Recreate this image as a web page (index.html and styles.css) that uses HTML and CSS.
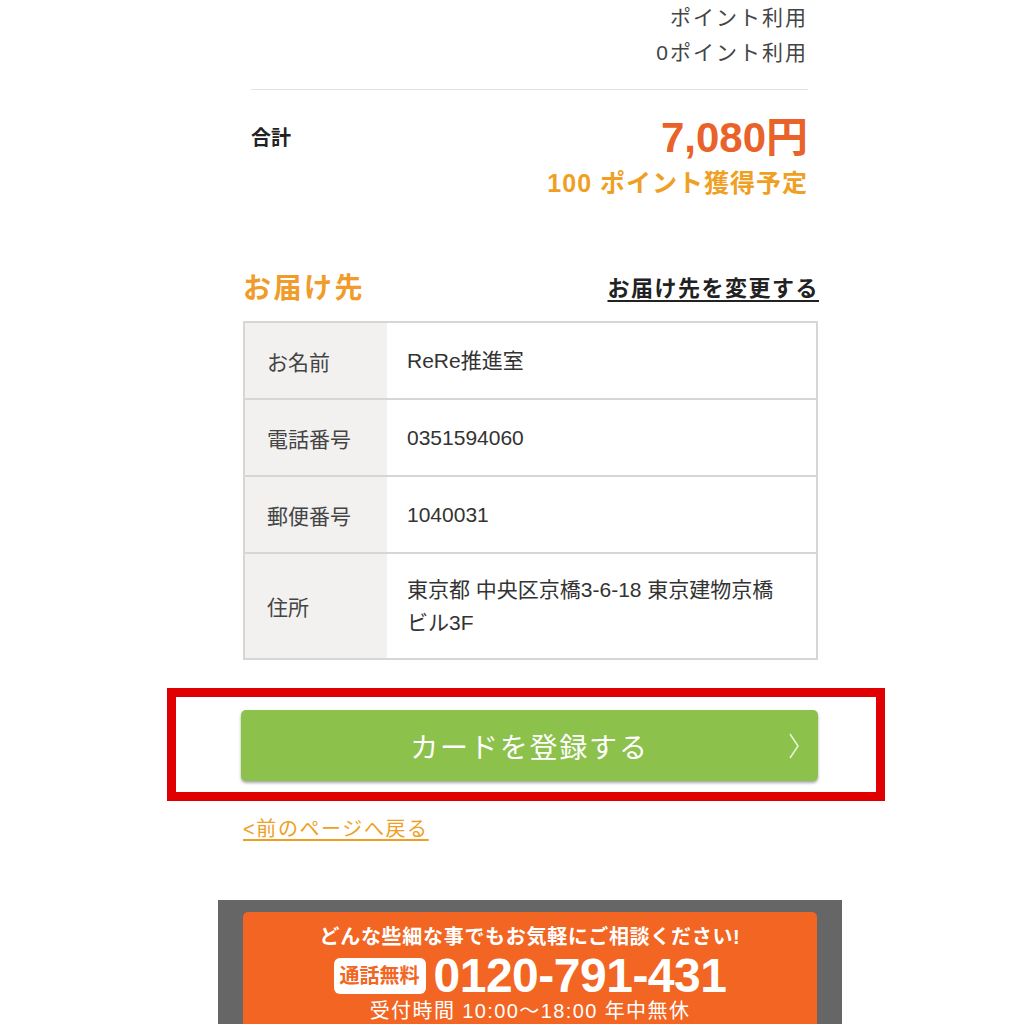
FILE: index.html
```html
<html>
	<head>
		<meta charset="utf-8">
		<link rel="stylesheet" href="styles.css">
	</head>
	<body>
		<div class="page">
			<div class="summary">
				<div class="pointLine">ポイント利用</div>
				<div class="pointLine">0ポイント利用</div>
				<div class="divider"></div>
				<div class="totalRow">
					<div class="totalLabel">合計</div>
					<div class="totalRight">
						<div class="price">7,080円</div>
						<div class="getPoint">100 ポイント獲得予定</div>
					</div>
				</div>
			</div>

			<div class="addrHead">
				<span class="addrTitle">お届け先</span>
				<a class="addrChange">お届け先を変更する</a>
			</div>

			<table class="addrTbl" cellspacing="0">
				<tr>
					<th>お名前</th>
					<td>ReRe推進室</td>
				</tr>
				<tr>
					<th>電話番号</th>
					<td>0351594060</td>
				</tr>
				<tr>
					<th>郵便番号</th>
					<td>1040031</td>
				</tr>
				<tr class="tallRow">
					<th>住所</th>
					<td>東京都 中央区京橋3-6-18 東京建物京橋ビル3F</td>
				</tr>
			</table>

			<div class="btnWrap">
				<a class="cardBtn">
					<span>カードを登録する</span>
					<svg class="chev" width="12" height="28" viewBox="0 0 12 28"><path d="M2 2 L10 14 L2 26" fill="none" stroke="#e6f4cf" stroke-width="1.6"/></svg>
				</a>
				<div class="redMark"></div>
			</div>

			<a class="backLink">&lt;前のページへ戻る</a>
		</div>

		<div class="footer">
			<div class="callBox">
				<div class="callMsg">どんな些細な事でもお気軽にご相談ください!</div>
				<div class="callRow">
					<span class="freeBadge">通話無料</span>
					<span class="telNo">0120-791-431</span>
				</div>
				<div class="callHours">受付時間 10:00〜18:00 年中無休</div>
			</div>
		</div>
	</body>
</html>
```

FILE: styles.css
```css
body {
	margin: 0;
	background: #ffffff;
	color: #333333;
	font-family: "Liberation Sans", "Noto Sans CJK JP", sans-serif;
}

.page {
	margin-left: 243px;
	width: 574px;
}

.summary {
	padding: 0 9px 0 8px;
}

.pointLine {
	text-align: right;
	font-size: 21px;
	line-height: 35px;
	letter-spacing: 2px;
	color: #444444;
}

.divider {
	margin-top: 19px;
	border-top: 1px solid #e2e2e2;
}

.totalRow {
	display: flex;
	justify-content: space-between;
	margin-top: 24px;
}

.totalLabel {
	font-size: 20px;
	font-weight: bold;
	line-height: 48px;
	color: #222222;
}

.totalRight {
	text-align: right;
}

.price {
	font-size: 42px;
	font-weight: bold;
	line-height: 48px;
	color: #e8622a;
}

.getPoint {
	margin-top: 4px;
	font-size: 25px;
	font-weight: bold;
	line-height: 34px;
	letter-spacing: 1px;
	color: #efa024;
}

.addrHead {
	display: flex;
	justify-content: space-between;
	align-items: center;
	margin-top: 66px;
	height: 40px;
}

.addrTitle {
	font-size: 28px;
	font-weight: bold;
	letter-spacing: 2.5px;
	color: #f09b2a;
}

.addrChange {
	font-size: 22px;
	font-weight: bold;
	color: #222222;
	letter-spacing: 1.5px;
	text-decoration: underline;
	text-underline-offset: 4px;
	margin-right: -2px;
}

.addrTbl {
	margin-top: 15px;
	width: 575px;
	border-collapse: collapse;
	border: 2px solid #d6d6d6;
}

.addrTbl tr {
	height: 77px;
}

.addrTbl .tallRow {
	height: 106px;
}

.addrTbl th {
	width: 120px;
	padding: 0 0 0 22px;
	background: #f2f1f0;
	border-bottom: 2px solid #d6d6d6;
	text-align: left;
	font-weight: normal;
	font-size: 21px;
	color: #444444;
}

.addrTbl td {
	padding: 0 24px 0 20px;
	border-bottom: 2px solid #d6d6d6;
	font-size: 21px;
	line-height: 33px;
	color: #333333;
}

.btnWrap {
	position: relative;
	margin-top: 50px;
	margin-left: -2px;
	width: 577px;
}

.cardBtn {
	display: flex;
	justify-content: center;
	align-items: center;
	position: relative;
	height: 71px;
	background: #8cc14b;
	border-radius: 5px;
	box-shadow: 0 2px 3px rgba(0, 0, 0, 0.35);
	color: #ffffff;
	font-size: 28px;
	letter-spacing: 1.8px;
}

.chev {
	position: absolute;
	right: 18px;
	top: 22px;
}

.redMark {
	position: absolute;
	left: -74px;
	top: -22px;
	width: 700px;
	height: 95px;
	border: 9px solid #e00000;
}

.backLink {
	display: block;
	margin-top: 33px;
	font-size: 20px;
	line-height: 30px;
	letter-spacing: 1.6px;
	color: #efa024;
	text-decoration: underline;
	text-underline-offset: 3px;
}

.footer {
	margin-top: 56px;
	margin-left: 218px;
	width: 624px;
	background: #666666;
	padding: 12px 25px 0 25px;
	box-sizing: border-box;
}

.callBox {
	background: #f26522;
	border-radius: 5px 5px 0 0;
	padding: 10px 0 6px 0;
	text-align: center;
	color: #ffffff;
}

.callMsg {
	font-size: 20px;
	font-weight: bold;
	line-height: 30px;
	letter-spacing: 0.7px;
}

.callRow {
	display: flex;
	justify-content: center;
	align-items: center;
	height: 44px;
	margin-top: 2px;
}

.freeBadge {
	background: #ffffff;
	color: #f26522;
	border-radius: 6px;
	font-size: 20px;
	font-weight: bold;
	padding: 4px 6px;
	line-height: 28px;
	margin-right: 8px;
}

.telNo {
	font-size: 48px;
	font-weight: bold;
	line-height: 44px;
	letter-spacing: -0.5px;
}

.callHours {
	font-size: 20px;
	line-height: 24px;
	margin-top: 1px;
	letter-spacing: 1.4px;
}
```
